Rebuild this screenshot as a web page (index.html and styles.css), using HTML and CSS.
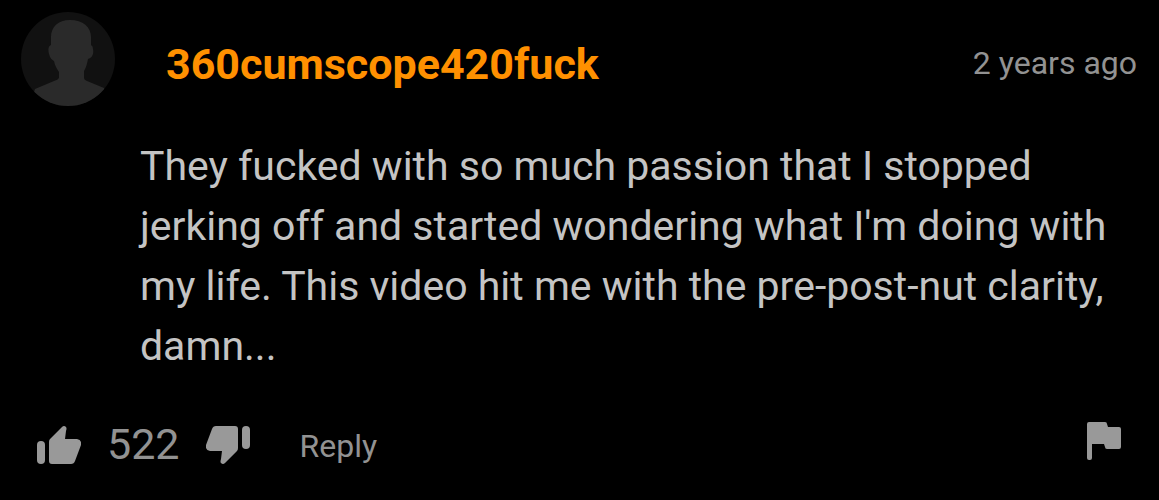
FILE: index.html
```html
<!DOCTYPE html>
<html lang="en">
<head>
<meta charset="utf-8">
<meta name="viewport" content="width=device-width, initial-scale=1">
<title>Comment</title>
<link rel="stylesheet" href="styles.css">
</head>
<body>
<article class="comment">
  <header class="comment-header">
    <svg class="avatar" viewBox="0 0 96 96" role="img" aria-label="User avatar">
      <defs><clipPath id="avatar-clip"><circle cx="48" cy="48" r="47"/></clipPath></defs>
      <circle cx="48" cy="48" r="47" fill="#111111"/>
      <path clip-path="url(#avatar-clip)" fill="#2a2a2a" d="M50 9C38 9 31 16 31 26L31 34C28 35 28 39 29 43C30 47 32 49 34 50C35 55 37 58 39 61L39 67Q38 69 34 70L15 78L8 100H90L84 77L67 70Q64 69 64 67L64 60C66 57 67 53 68 48C72 47 74 43 73 38Q73 35 71 34V26C71 16 63 9 50 9Z"/>
    </svg>
    <a class="username" href="#">360cumscope420fuck</a>
    <time class="date">2 years ago</time>
  </header>
  <p class="comment-text">They fucked with so much passion that I stopped jerking off and started wondering what I'm doing with my life. This video hit me with the pre-post-nut clarity, damn...</p>
  <footer class="actions">
    <button class="icon-button" type="button" aria-label="Like">
      <svg class="thumb" viewBox="0 0 44 38"><rect y="15" width="8" height="23" rx="4"/><path d="M13 13L25 1Q27-1 29 1Q30 2 29 5L28 13H40Q45 14 44 19L38 35Q37 38 34 38H15Q12 38 12 35V16Q12 14 13 13Z"/></svg>
    </button>
    <span class="votes">522</span>
    <button class="icon-button" type="button" aria-label="Dislike">
      <svg class="thumb thumb-down" viewBox="0 0 44 38"><rect y="15" width="8" height="23" rx="4"/><path d="M13 13L25 1Q27-1 29 1Q30 2 29 5L28 13H40Q45 14 44 19L38 35Q37 38 34 38H15Q12 38 12 35V16Q12 14 13 13Z"/></svg>
    </button>
    <button class="reply" type="button">Reply</button>
    <button class="icon-button report" type="button" aria-label="Report">
      <svg class="flag" viewBox="0 0 34 38"><path d="M2 0H18Q20 0 20 2L21 5H32Q34 5 34 7V25Q34 27 32 27H20Q18 27 18 25L17 22H5V36Q5 38 3 38H2Q0 38 0 36V2Q0 0 2 0Z"/></svg>
    </button>
  </footer>
</article>
</body>
</html>
```
FILE: styles.css
```css
* {
  box-sizing: border-box;
}

body {
  margin: 0;
  background: #000;
  color: #929292;
  font-family: Roboto, sans-serif;
}

.comment {
  padding: 11px 22px 24px 20px;
}

.comment-header {
  display: flex;
  align-items: center;
}

.avatar {
  flex: none;
  width: 96px;
  height: 96px;
}

.username {
  margin: 10px 0 0 50px;
  color: #ff9000;
  font-size: 43px;
  font-weight: 700;
  line-height: 48px;
  text-decoration: none;
}

.date {
  margin: 8px 0 0 auto;
  font-size: 32px;
  line-height: 40px;
  white-space: nowrap;
}

.comment-text {
  margin: 29px 0 0 120px;
  color: #c4c4c4;
  font-size: 41px;
  line-height: 60px;
}

.actions {
  display: flex;
  align-items: center;
  margin-top: 44px;
  padding: 0 16px 0 17px;
}

.icon-button,
.reply {
  padding: 0;
  border: 0;
  background: none;
  color: inherit;
  font: inherit;
  cursor: pointer;
}

.icon-button svg {
  display: block;
  fill: #999;
}

.thumb {
  width: 44px;
  height: 38px;
}

.thumb-down {
  transform: rotate(180deg);
}

.votes {
  margin: 0 26px;
  padding-bottom: 2px;
  font-size: 43px;
  line-height: 48px;
}

.reply {
  margin-left: 50px;
  padding-top: 2px;
  font-size: 32px;
  line-height: 40px;
}

.report {
  margin: 0 0 8px auto;
}

.flag {
  width: 34px;
  height: 38px;
}
```
